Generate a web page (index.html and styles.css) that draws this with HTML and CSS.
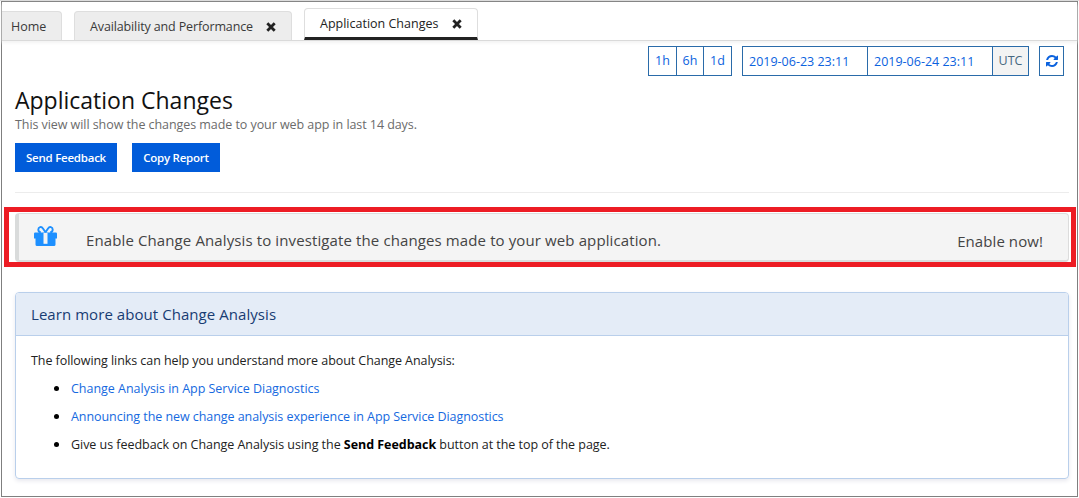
FILE: index.html
```html
<!DOCTYPE html>
<html lang="en">
<head>
<meta charset="utf-8">
<title>Application Changes</title>
<link rel="stylesheet" href="styles.css">
</head>
<body>
<div class="window">
  <nav class="tabs">
    <div class="tab tab-home"><span class="t-home">Home</span></div>
    <div class="tab tab-perf"><span class="t-perf">Availability and Performance</span>
      <svg class="close" viewBox="0 0 10 10"><path d="M1.3 1.3 8.7 8.7M8.7 1.3 1.3 8.7"/></svg></div>
    <div class="tab active"><span class="t-app">Application Changes</span>
      <svg class="close" viewBox="0 0 10 10"><path d="M1.3 1.3 8.7 8.7M8.7 1.3 1.3 8.7"/></svg></div>
  </nav>
  <div class="toolbar">
    <div class="group ranges"><span>1h</span><span>6h</span><span>1d</span></div>
    <div class="group dates"><span class="date">2019-06-23 23:11</span><span class="date">2019-06-24 23:11</span><span class="utc">UTC</span></div>
    <div class="group refresh"><svg viewBox="0 0 1536 1536"><path d="M1511 928q0 5-1 7-64 268-268 434.500T764 1536q-146 0-282.500-55T238 1324l-129 129q-19 19-45 19t-45-19-19-45V960q0-26 19-45t45-19h448q26 0 45 19t19 45-19 45l-137 137q71 66 161 102t187 36q134 0 250-65t186-179q11-17 53-117 8-23 30-23h192q13 0 22.500 9.500t9.500 22.500zm25-800v448q0 26-19 45t-45 19h-448q-26 0-45-19t-19-45 19-45l138-138Q969 256 768 256q-134 0-250 65T332 500q-11 17-53 117-8 23-30 23H50q-13 0-22.500-9.500T18 608v-7q65-268 270-434.500T768 0q146 0 284 55.500T1297 212l130-129q19-19 45-19t45 19 19 45z"/></svg></div>
  </div>
  <main class="content">
    <h1><span>Application Changes</span></h1>
    <p class="subtitle">This view will show the changes made to your web app in last 14 days.</p>
    <div class="actions"><button class="send">Send Feedback</button><button class="copy">Copy Report</button></div>
    <hr>
  </main>
  <div class="highlight">
    <div class="banner">
      <svg class="gift" viewBox="0 0 23 20"><path class="fill" d="M1.200 6.500H21.800Q23 6.500 23 7.700V12.500H21.500V18.500Q21.500 20 20 20H3Q1.500 20 1.500 18.500V12.500H0V7.700Q0 6.500 1.200 6.500Z"/><path class="bow" d="M11.500 6.300L8.800 2.300C7.500 .2 4.300 1 4.300 3.500C4.300 5.200 5.400 6.200 6.800 6.200M11.500 6.300L14.200 2.300C15.500 .2 18.700 1 18.700 3.500C18.700 5.200 17.600 6.200 16.200 6.200"/><path class="ribbon" d="M9.500 7H13.500V17.800H9.500Z"/></svg>
      <span class="banner-text">Enable Change Analysis to investigate the changes made to your web application.</span>
      <span class="enable">Enable now!</span>
    </div>
  </div>
  <section class="card">
    <h2><span>Learn more about Change Analysis</span></h2>
    <div class="card-body">
      <p class="intro">The following links can help you understand more about Change Analysis:</p>
      <ul>
        <li><a class="l1">Change Analysis in App Service Diagnostics</a></li>
        <li><a class="l2">Announcing the new change analysis experience in App Service Diagnostics</a></li>
        <li><span class="l3">Give us feedback on Change Analysis using the <b>Send Feedback</b> button at the top of the page.</span></li>
      </ul>
    </div>
  </section>
</div>
</body>
</html>
```
FILE: styles.css
```css
* { box-sizing: border-box; }
body {
  margin: 0;
  padding: 1px;
  height: 498px;
  overflow: hidden;
  background: #fff;
  box-shadow: inset 0 1px #dcdcdc;
  font: 12.5px/18px "Open Sans", "Noto Sans", sans-serif;
  color: #222;
}
.window { width: 1077px; height: 496px; border: 1px solid #7f7f7f; }
.tabs {
  display: flex;
  align-items: flex-end;
  height: 39px;
  border-bottom: 1px solid #dadada;
  box-shadow: 0 2px 3px #f3f3f3;
}
.tab {
  display: flex;
  align-items: center;
  height: 29px;
  padding-top: 2px;
  border: 1px solid #dedede;
  border-bottom: 0;
  border-radius: 4px 4px 0 0;
  background: #ededed;
  color: #3a3a3a;
  white-space: nowrap;
}
.tab-home { width: 60px; border-left: 0; border-top-left-radius: 0; padding-left: 9px; margin-right: 12px; }
.tab-perf { width: 218px; padding-left: 15px; margin-right: 12px; justify-content: space-between; padding-right: 15px; }
.t-perf { letter-spacing: -0.13px; }
.active { width: 174px; height: 32px; background: #fff; border-bottom: 3px solid #222; border-radius: 4px 4px 0 0; padding: 2px 15px 0; justify-content: space-between; color: #222; }
.close { width: 10px; height: 10px; fill: none; stroke: #222; stroke-width: 2.8; }
.toolbar { display: flex; justify-content: flex-end; gap: 10px; padding: 5px 13px 0 0; height: 35px; color: #0b62de; }
.group { display: flex; height: 30px; border: 1px solid #2a6ba9; }
.group span { line-height: 28px; text-align: center; }
.group span + span { border-left: 1px solid #2a6ba9; }
.ranges { width: 84px; }
.ranges span { width: 27px; }
.ranges span:last-child { width: 28px; }
.dates { width: 287px; }
.dates .date { width: 125px; text-align: left; padding-left: 6px; line-height: 30px; flex: none; }
.dates .date:first-child { width: 124px; }
.dates .utc { flex: 1; background: #f3f3f3; color: #45677f; }
.refresh { width: 25px; align-items: center; justify-content: center; }
.refresh svg { width: 12px; height: 12px; margin-bottom: 1px; fill: #0b62de; }
.content { padding: 0 8px 0 13px; }
h1 { margin: 0; padding-top: 10px; height: 40px; font-weight: 400; font-size: 23px; line-height: 28px; color: #111; }
.subtitle { margin: 0; height: 27px; line-height: 18px; color: #6b6b6b; white-space: nowrap; letter-spacing: -0.065px; }
.actions { display: flex; gap: 15px; }
.actions button { height: 29px; padding: 0; border: 0; background: #015cda; color: #fff; font: 600 11.500px/29px "Open Sans", sans-serif; letter-spacing: -0.24px; }
.send { width: 102px; }
.copy { width: 88px; }
hr { border: 0; border-top: 1px solid #ececec; margin: 20px 0 0; }
.highlight { height: 60px; margin: 14px 1px 0 2px; width: 1072px; border: 5px solid #ed1c24; padding: 1px 2px 0 6px; }
.banner {
  display: flex;
  align-items: flex-start;
  height: 49px;
  background: #f4f4f4;
  border: 1px solid #dcdcdc;
  border-left: 4px solid #d9dbdb;
  border-bottom: 2px solid #d9dbdb;
  border-radius: 4px;
  font-size: 15px;
  color: #444;
  white-space: nowrap;
}
.gift { width: 23px; height: 20px; margin: 12px 29px 0 15px; }
.fill { fill: #1e90ff; }
.bow { fill: none; stroke: #1e90ff; stroke-width: 1.900; }
.ribbon { fill: #f4f4f4; }
.banner-text { line-height: 52px; letter-spacing: 0.115px; }
.enable { margin-left: auto; margin-right: 25px; line-height: 54px; letter-spacing: 0.08px; }
.card { width: 1054px; height: 187px; margin: 25px 0 0 13px; border: 1px solid #b9cfeb; border-radius: 4px; box-shadow: 0 2px 4px #e8e8ee; overflow: hidden; }
h2 { margin: 0; height: 43px; padding-left: 15px; background: #e4ecf7; border-bottom: 1px solid #b9cfeb; font-weight: 400; font-size: 15px; line-height: 43px; color: #183c73; letter-spacing: 0.06px; }
.card-body { padding: 15px; }
.intro { margin: 0; line-height: 19px; letter-spacing: -0.065px; }
.l1 { letter-spacing: -0.02px; }
.l2 { letter-spacing: -0.06px; }
.l3 { letter-spacing: -0.04px; }
ul { margin: 3px 0 0; padding-left: 40px; }
li { height: 28px; line-height: 28px; white-space: nowrap; }
li::marker { color: #000; font-size: 15px; }
a { color: #1569e0; }
b { color: #000; }
```
